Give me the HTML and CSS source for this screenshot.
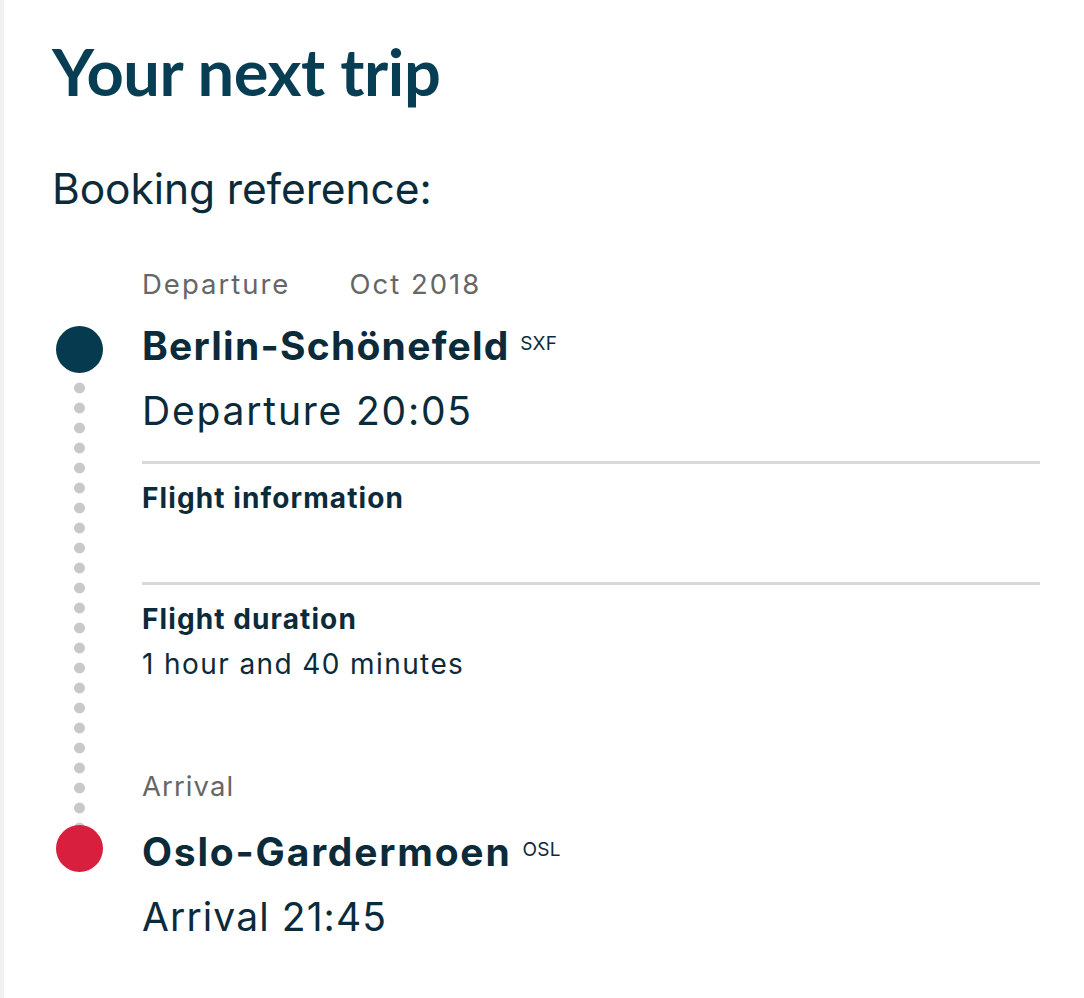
FILE: index.html
```html
<!DOCTYPE html>
<html lang="en">
<head>
<meta charset="utf-8">
<title>Your next trip</title>
<link rel="stylesheet" href="styles.css">
</head>
<body>
<main class="page">
  <h1 class="title">Your next trip</h1>
  <p class="booking">Booking reference:</p>

  <section class="trip">
    <p class="label label-dep"><span>Departure</span><span>Oct 2018</span></p>

    <span class="marker marker-dep"></span>
    <h2 class="city city-dep">Berlin-Schönefeld <span class="code">SXF</span></h2>

    <span class="rail"></span>

    <p class="time time-dep">Departure 20:05</p>

    <div class="info info-flight">
      <h3 class="info-title">Flight information</h3>
    </div>

    <div class="info info-duration">
      <h3 class="info-title">Flight duration</h3>
      <p class="info-text">1 hour and 40 minutes</p>
    </div>

    <p class="label label-arr"><span>Arrival</span></p>

    <span class="marker marker-arr"></span>
    <h2 class="city city-arr">Oslo-Gardermoen <span class="code">OSL</span></h2>

    <p class="time time-arr">Arrival 21:45</p>
  </section>
</main>
</body>
</html>
```

FILE: styles.css
```css
html, body {
  margin: 0;
  padding: 0;
  background: #ffffff;
}

body {
  border-left: 4px solid #f1f1f1;
  min-height: 998px;
  box-sizing: border-box;
  font-family: Inter, Lato, "Noto Sans", sans-serif;
  color: #0b2b3a;
}

.page {
  padding: 33px 44px 0 48px;
}

.title {
  margin: 0;
  font-family: Lato, Inter, sans-serif;
  font-size: 65px;
  line-height: 77px;
  font-weight: 700;
  letter-spacing: -0.4px;
  color: #083e54;
}

.booking {
  margin: 56px 0 0;
  font-size: 42.5px;
  line-height: 46px;
  font-weight: 400;
  letter-spacing: -0.1px;
  color: #0b2b3a;
}

.trip {
  display: grid;
  grid-template-columns: 90px 1fr;
  margin-top: 55px;
}

.label {
  grid-column: 2;
  margin: 0;
  display: flex;
  gap: 59px;
  font-size: 27.5px;
  line-height: 34px;
  letter-spacing: 2px;
  color: #666666;
}

.label-dep {
  grid-row: 1;
  margin-bottom: 21px;
}

.label-arr {
  grid-row: 6;
  margin-top: 88px;
  margin-bottom: 25px;
  letter-spacing: 1.1px;
}

.marker {
  grid-column: 1;
  width: 47px;
  height: 47px;
  border-radius: 50%;
  margin-left: 4px;
  align-self: center;
  position: relative;
  z-index: 1;
}

.marker-dep {
  grid-row: 2;
  background: #063a4e;
  margin-top: 4px;
}

.marker-arr {
  grid-row: 7;
  background: #d81f3d;
  margin-top: -8px;
}

.city {
  grid-column: 2;
  margin: 0;
  font-size: 39px;
  line-height: 48px;
  font-weight: 700;
  letter-spacing: 1.25px;
  color: #0b2b3a;
}

.city-dep { grid-row: 2; }

.city-arr {
  grid-row: 7;
  letter-spacing: 1.8px;
}

.code {
  font-size: 19px;
  font-weight: 400;
  letter-spacing: 0.3px;
  vertical-align: top;
  line-height: 44px;
  margin-left: 0;
}

.rail {
  grid-column: 1;
  grid-row: 3 / 7;
  margin: 5px 0 -10px 4px;
  width: 47px;
  background-image: radial-gradient(circle, #c9c9c9 5px, rgba(201, 201, 201, 0) 5.8px);
  background-size: 47px 20px;
  background-repeat: repeat-y;
  background-position: center top;
}

.time {
  grid-column: 2;
  margin: 0;
  font-size: 39px;
  line-height: 46px;
  font-weight: 400;
  letter-spacing: 1.8px;
  color: #0b2b3a;
}

.time-dep {
  grid-row: 3;
  margin-top: 15px;
  margin-bottom: 27px;
}

.time-arr {
  grid-row: 8;
  margin-top: 18px;
  letter-spacing: 1.1px;
}

.info {
  grid-column: 2;
  border-top: 3px solid #d9d9d9;
  padding-top: 17px;
}

.info-flight {
  grid-row: 4;
  min-height: 121px;
  box-sizing: border-box;
}

.info-duration {
  grid-row: 5;
}

.info-title {
  margin: 0;
  font-size: 28px;
  line-height: 34px;
  font-weight: 700;
  letter-spacing: 1.1px;
  color: #0b2b3a;
}

.info-text {
  margin: 11px 0 0;
  font-size: 28px;
  line-height: 34px;
  font-weight: 400;
  letter-spacing: 1.4px;
  color: #0b2b3a;
}
```
